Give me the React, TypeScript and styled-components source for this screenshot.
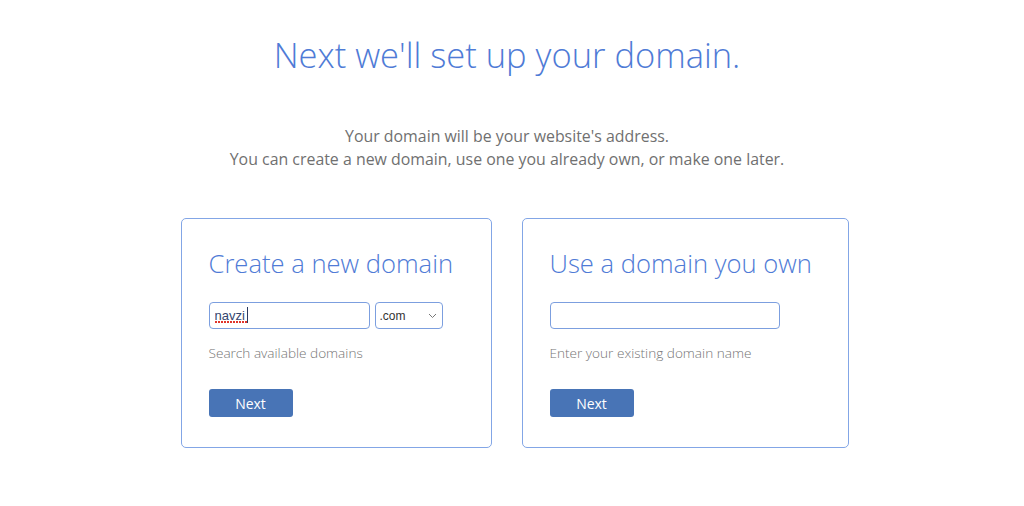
import React from 'react'
import styled, { createGlobalStyle } from 'styled-components'

const GlobalStyle = createGlobalStyle`
  html, body {
    margin: 0;
    padding: 0;
    background: #ffffff;
  }
  body {
    font-family: "Open Sans", "Liberation Sans", Arial, sans-serif;
  }
  * {
    box-sizing: border-box;
  }
`

const Page = styled.main`
  width: 1024px;
  height: 506px;
  display: flex;
  flex-direction: column;
  align-items: center;
  padding-top: 34px;
`

const Title = styled.h1`
  margin: 0 0 0 -10px;
  font-size: 34.5px;
  line-height: 42px;
  font-weight: 300;
  color: #4f7bd6;
`

const Intro = styled.p`
  margin: 49px 0 0 -10px;
  font-size: 15.9px;
  line-height: 23px;
  font-weight: 400;
  color: #707070;
  text-align: center;
`

const Cards = styled.div`
  display: flex;
  gap: 30px;
  margin: 47px 0 0 5px;
`

const Card = styled.section<{ $width: number }>`
  width: ${({ $width }) => $width}px;
  height: 230px;
  border: 1px solid #83a6e6;
  border-radius: 5px;
  padding: 29px 27px 0 27px;
  display: flex;
  flex-direction: column;
  align-items: flex-start;
`

const CardTitle = styled.h2`
  margin: 0;
  font-size: 25.6px;
  line-height: 32px;
  font-weight: 300;
  color: #4f7bd6;
`

const FieldRow = styled.div`
  display: flex;
  gap: 5px;
  margin-top: 22px;
`

// dotted spell-check line and caret drawn as background layers
const TextField = styled.input<{ $width: number; $typo?: boolean }>`
  width: ${({ $width }) => $width}px;
  height: 27px;
  border: 1px solid #7c9fdf;
  border-radius: 4px;
  padding: 0 5px;
  font-family: "Liberation Sans", Arial, sans-serif;
  font-size: 13px;
  color: #34466f;
  outline: none;
  background-color: #fff;
  background-repeat: no-repeat, no-repeat;
  ${({ $typo }) =>
    $typo
      ? `
    background-image:
      repeating-linear-gradient(90deg, #e0352b 0 2px, transparent 2px 3px),
      linear-gradient(#2a3a60, #2a3a60);
    background-size: 32px 2px, 1px 16px;
    background-position: 5px 18px, 37px 4px;
  `
      : ''}
`

const SelectBox = styled.div`
  position: relative;
  width: 68px;
  height: 27px;
`

const Select = styled.select`
  appearance: none;
  width: 100%;
  height: 100%;
  border: 1px solid #7c9fdf;
  border-radius: 4px;
  padding: 0 0 0 4px;
  font-family: "Liberation Sans", Arial, sans-serif;
  font-size: 12px;
  color: #333;
  background: #fff;
  outline: none;
`

const Chevron = styled.svg`
  position: absolute;
  right: 6px;
  top: 11px;
  pointer-events: none;
`

const Hint = styled.p`
  margin: 14px 0 0 0;
  font-size: 13.6px;
  line-height: 20px;
  font-weight: 300;
  color: #757575;
`

const NextButton = styled.button`
  margin-top: 26px;
  width: 84px;
  height: 28px;
  border: none;
  border-radius: 3px;
  background: #4874b6;
  color: #fff;
  font-family: "Open Sans", "Liberation Sans", Arial, sans-serif;
  font-size: 14px;
  font-weight: 400;
  cursor: pointer;
`

export default function App() {
  return (
    <>
      <GlobalStyle />
      <Page>
        <Title>Next we'll set up your domain.</Title>
        <Intro>
          Your domain will be your website's address.
          <br />
          You can create a new domain, use one you already own, or make one later.
        </Intro>
        <Cards>
          <Card $width={311}>
            <CardTitle>Create a new domain</CardTitle>
            <FieldRow>
              <TextField $width={161} $typo defaultValue="navzi" spellCheck={false} />
              <SelectBox>
                <Select defaultValue=".com">
                  <option>.com</option>
                  <option>.net</option>
                  <option>.org</option>
                </Select>
                <Chevron width="9" height="6" viewBox="0 0 9 6">
                  <path d="M1 1l3.5 3.5L8 1" fill="none" stroke="#777" strokeWidth="1" />
                </Chevron>
              </SelectBox>
            </FieldRow>
            <Hint>Search available domains</Hint>
            <NextButton>Next</NextButton>
          </Card>
          <Card $width={327}>
            <CardTitle>Use a domain you own</CardTitle>
            <FieldRow>
              <TextField $width={230} />
            </FieldRow>
            <Hint>Enter your existing domain name</Hint>
            <NextButton>Next</NextButton>
          </Card>
        </Cards>
      </Page>
    </>
  )
}
